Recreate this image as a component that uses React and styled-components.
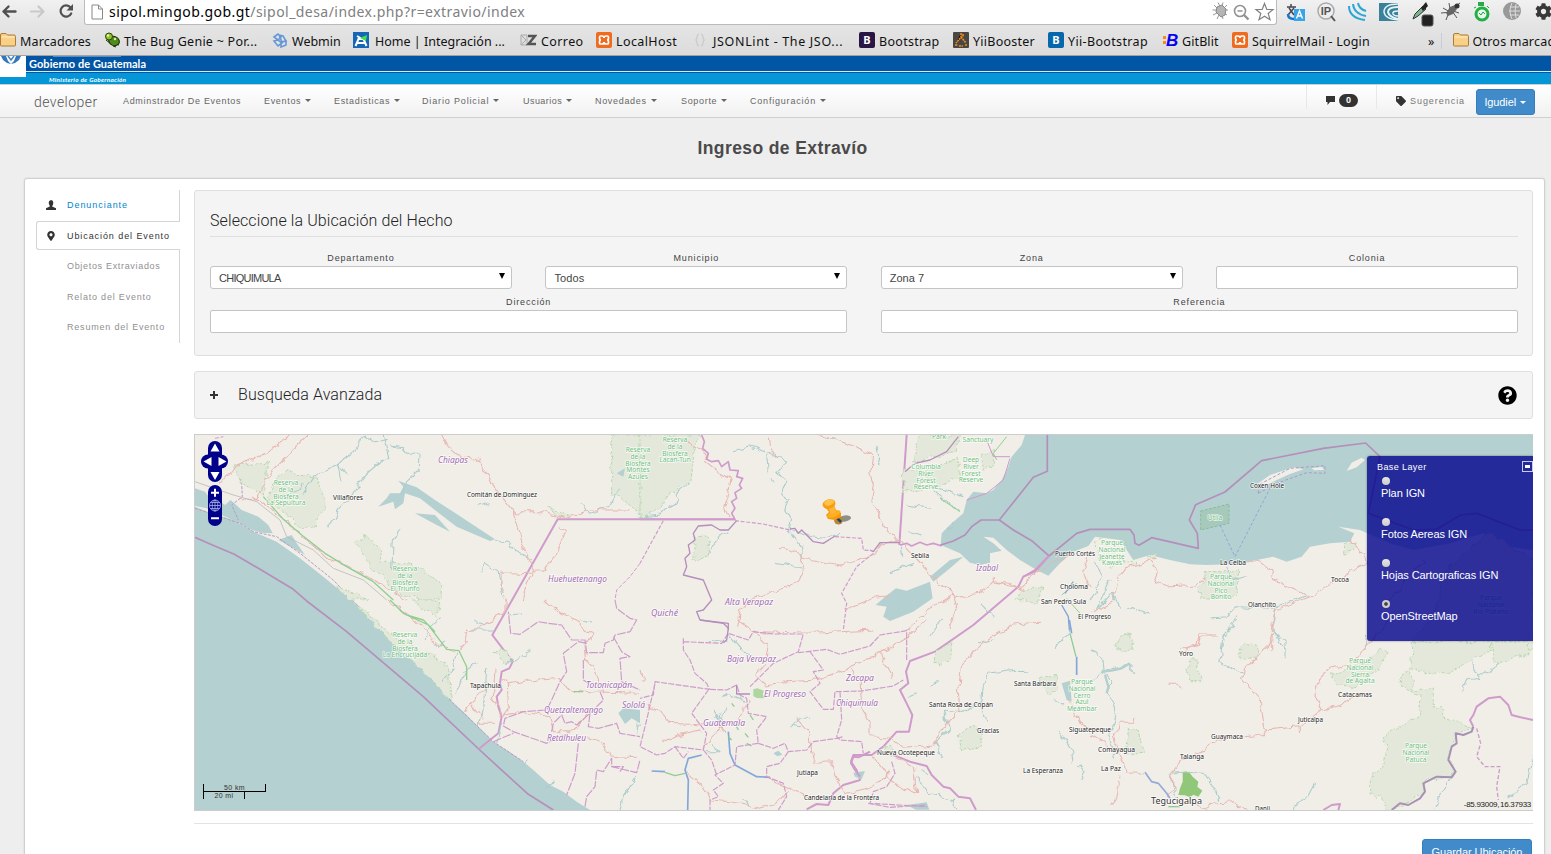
import React from 'react';
import styled, { createGlobalStyle, css } from 'styled-components';
import { FaTag, FaMapMarkerAlt, FaQuestionCircle, FaCog } from 'react-icons/fa';

const GlobalStyle = createGlobalStyle`
  * { box-sizing: border-box; }
  html, body { margin: 0; height: 854px; overflow: hidden; }
  body {
    background: #eee;
    font-family: 'Liberation Sans', Arial, sans-serif;
    font-size: 11px;
    color: #444;
  }
`;

const Page = styled.div`
  width: 1551px;
  height: 854px;
  overflow: hidden;
  display: flex;
  flex-direction: column;
`;

/* ---------- browser chrome ---------- */

const Chrome = styled.header`
  flex: none;
  height: 56px;
  background: linear-gradient(#f1f1f1, #e4e4e4 26px, #dcdcdc);
  border-bottom: 1px solid #a3a3a3;
  font-family: 'Noto Sans', 'Open Sans', sans-serif;
  color: #111;
  overflow: hidden;
`;

const Toolbar = styled.div`
  display: flex;
  height: 25px;
`;

const NavButtons = styled.div`
  width: 84px;
  display: flex;
  svg { display: block; }
`;

const AddressBar = styled.div`
  width: 1193px;
  height: 25px;
  display: flex;
  align-items: center;
  padding-left: 6px;
  background: #fff;
  border: 1px solid #bbb;
  border-top: 0;
  border-radius: 0 0 3px 3px;
`;

const Url = styled.span`
  flex: 1;
  margin-left: 5px;
  font-size: 14px;
  line-height: 20px;
  letter-spacing: 0.45px;
  color: #808080;
  white-space: nowrap;
  b { font-weight: 400; color: #000; }
`;

const Extensions = styled.div`
  display: flex;
  flex: none;
  svg { display: block; }
`;

const Bookmarks = styled.nav`
  display: flex;
  height: 30px;
  align-items: center;
`;

const Bookmark = styled.div`
  flex: none;
  width: ${(p) => p.$w}px;
  display: flex;
  align-items: center;
  gap: ${(p) => p.$gap || 4}px;
  font-size: 12.5px;
  line-height: 18px;
  padding-top: 4px;
  letter-spacing: ${(p) => p.$ls || 0}px;
  white-space: nowrap;
  svg { flex: none; margin-top: -4px; }
`;

const BookmarkEnd = styled.div`
  display: flex;
  align-items: center;
  padding-top: 2px;
  font-size: 12.5px;
  letter-spacing: 0.2px;
  white-space: nowrap;
  i { width: 1px; height: 16px; margin: 0 11px 0 6px; background: #c6cbe0; }
  span { margin-left: 4px; }
  svg { margin-top: -2px; }
`;

/* ---------- site banner and navbar ---------- */

const Banner = styled.div`
  flex: none;
  position: relative;
  height: 28px;
  background: linear-gradient(#0055a5 15px, #dbe7f3 15px, #dbe7f3 16px, #0055a5 16px, #0055a5 17px, #0596d8 17px);
  svg { display: block; }
`;

const Navbar = styled.nav`
  flex: none;
  height: 34px;
  display: flex;
  align-items: center;
  border-top: 1px solid #d0d0d0;
  border-bottom: 1px solid #d0d0d0;
  background: linear-gradient(#fff, #f1f1f1);
  padding: 0 16px 0 34px;
`;

const small = css`
  font-size: 9px;
  letter-spacing: 0.85px;
  white-space: nowrap;
`;

const Brand = styled.div`
  width: 89px;
  padding-top: 2px;
  font-family: Roboto, sans-serif;
  font-weight: 300;
  font-size: 14px;
  letter-spacing: 0.45px;
  color: #555;
`;

const NavItem = styled.div`
  ${small}
  width: ${(p) => p.$w}px;
  letter-spacing: ${(p) => p.$ls ?? 0.68}px;
  color: #666;
`;

const Caret = styled.span`
  display: inline-block;
  margin-left: 4px;
  vertical-align: 2px;
  border: 3px solid transparent;
  border-top-color: currentColor;
  border-bottom: 0;
`;

const Spacer = styled.div`
  flex: 1;
`;

const NavCell = styled.div`
  align-self: flex-start;
  width: ${(p) => p.$w}px;
  height: 24px;
  padding: 7px 0 0 19px;
  display: flex;
  align-items: center;
  gap: 4px;
  border-left: 1px solid #e8e8e8;
  color: #333;
  ${small}
  span { color: #777; letter-spacing: 0.95px; }
`;

const Badge = styled.em`
  width: 19px;
  height: 13px;
  border-radius: 7px;
  background: #333;
  color: #fff;
  font: bold 9px/13px 'Liberation Sans', sans-serif;
  letter-spacing: 0;
  text-align: center;
`;

const Button = styled.button`
  flex: none;
  border: 1px solid #357ebd;
  border-radius: 3px;
  background: #428bca;
  color: #fff;
  font: 11px/14px 'Liberation Sans', Arial, sans-serif;
  letter-spacing: -0.05px;
  width: ${(p) => p.$w}px;
  height: 26px;
  margin-top: ${(p) => p.$mt || 0}px;
  padding: 0;
  white-space: nowrap;
`;

/* ---------- content ---------- */

const PageTitle = styled.h1`
  flex: none;
  margin: 0;
  height: 60px;
  padding: 19px 0 0 14px;
  text-align: center;
  font-size: 17.5px;
  line-height: 22px;
  letter-spacing: 0.4px;
  color: #4a4a4a;
`;

const Card = styled.main`
  flex: none;
  display: flex;
  width: 1521px;
  height: 720px;
  margin-left: 24px;
  padding: 11px 11px 0;
  border: 1px solid #d0d0d0;
  border-radius: 3px;
  background: #fff;
  box-shadow: 0 0 2px rgba(0, 0, 0, 0.12);
`;

const Tabs = styled.ul`
  list-style: none;
  margin: 0 14px 0 0;
  padding: 0;
  width: 144px;
`;

const Tab = styled.li`
  ${small}
  letter-spacing: ${(p) => p.$ls ?? 0.8}px;
  display: flex;
  align-items: center;
  height: ${(p) => p.$h}px;
  padding-left: ${(p) => (p.$active ? 9 : 10)}px;
  padding-bottom: ${(p) => p.$pb || 0}px;
  color: ${(p) => p.$color};
  border-right: 1px solid #d5d5d5;
  ${(p) =>
    p.$active &&
    css`
      border: 1px solid #d5d5d5;
      border-right: 0;
      border-radius: 3px 0 0 3px;
    `}
  svg { width: 10px; height: 10px; color: #333; }
  span { margin-left: ${(p) => (p.$icon ? 11 : 21)}px; }
`;

const Content = styled.section`
  width: 1339px;
`;

const Well = styled.div`
  height: ${(p) => p.$h}px;
  margin-bottom: 15px;
  padding: 0 14px 0 15px;
  border: 1px solid #dfdfdf;
  border-radius: 3px;
  background: #f4f4f4;
`;

const Legend = styled.h2`
  margin: 0;
  font-family: Roboto, sans-serif;
  font-weight: 300;
  font-size: 16px;
  line-height: 20px;
  letter-spacing: 0.1px;
  color: #222;
`;

const FormHead = styled.div`
  height: 46px;
  padding-top: 20px;
  border-bottom: 1px solid #dedede;
`;

const FormRow = styled.div`
  display: grid;
  grid-template-columns: repeat(${(p) => p.$cols}, 1fr);
  gap: 33.5px;
  height: 44px;
  margin-top: ${(p) => p.$mt || 0}px;
`;

const Field = styled.label`
  text-align: center;
  color: #444;
  ${small}
  line-height: 14px;
`;

const control = css`
  display: flex;
  align-items: center;
  width: 100%;
  height: 23px;
  margin-top: 1px;
  border: 1px solid #c4c4c4;
  border-radius: 2px;
  background: #fff;
`;

const Input = styled.input`
  ${control}
`;

const SelectBox = styled.div`
  ${control}
  justify-content: space-between;
  padding: 0 6px 0 8px;
  border-radius: 3px;
  color: #444;
  font-size: 11px;
  letter-spacing: ${(p) => p.$ls}px;
  &::after {
    content: '';
    margin-top: -3px;
    border: 3.5px solid transparent;
    border-top: 6px solid #000;
    border-bottom: 0;
  }
`;

const SearchBar = styled.div`
  display: flex;
  align-items: center;
  height: 46px;
  padding-right: 1px;
`;

const Plus = styled.i`
  width: 8px;
  height: 8px;
  margin-right: 20px;
  background: linear-gradient(#333, #333) center / 8px 2px no-repeat, linear-gradient(#333, #333) center / 2px 8px no-repeat;
`;

const MapFrame = styled.div`
  position: relative;
  height: 377px;
  border: 1px solid #ccc;
  border-right: 0;
  background: #f1eee8;
  overflow: hidden;
  > svg { display: block; }
`;

const LayerPanel = styled.aside`
  position: absolute;
  top: 21px;
  right: 0;
  width: 166px;
  height: 185px;
  padding: 5px 0 0 10px;
  border-radius: 3px 0 0 3px;
  background: rgba(0, 0, 139, 0.8);
  color: #fff;
  box-shadow: 0 0 2px rgba(0, 0, 0, 0.5);
`;

const PanelHead = styled.div`
  display: flex;
  justify-content: space-between;
  height: 15px;
  line-height: 12px;
  font-size: 9px;
  letter-spacing: 0.4px;
`;

const Minimize = styled.i`
  width: 11px;
  height: 11px;
  border: 1px solid #c9caf0;
  background: linear-gradient(#fff, #fff) center / 5px 3px no-repeat;
`;

const LayerOption = styled.div`
  height: 41px;
  padding: 1px 0 0 4px;
  font-size: 11px;
  line-height: 13px;
  letter-spacing: -0.08px;
`;

const Radio = styled.i`
  display: block;
  width: 8px;
  height: 8px;
  margin: 0 0 2px 1px;
  border-radius: 50%;
  background: ${(p) => (p.$on ? 'radial-gradient(#444 1.4px, #ccc 2.2px)' : 'linear-gradient(#e6e6e6, #ccc)')};
`;

const Scale = styled.div`
  position: absolute;
  left: 8px;
  bottom: 11px;
  width: 63px;
  color: #333;
  font-size: 7px;
  line-height: 8px;
  letter-spacing: 0.4px;
  text-align: center;
`;

const ScaleTop = styled.div`
  height: 8px;
  border: 1px solid #000;
  border-top: 0;
`;

const ScaleBottom = styled.div`
  width: 42px;
  height: 7px;
  border: 1px solid #000;
  border-width: 0 1px;
  line-height: 7px;
`;

const Coordinates = styled.div`
  position: absolute;
  right: 2px;
  bottom: 0;
  color: #222;
  font: 8px/10px 'Liberation Sans', sans-serif;
  letter-spacing: -0.3px;
  word-spacing: -1px;
`;

const Footer = styled.div`
  display: flex;
  justify-content: flex-end;
  margin-top: 12px;
  padding: 15px 1px 0 0;
  border-top: 1px solid #e3e3e3;
`;

/* ---------- icons ---------- */

const NavArrows = () => (
  <svg width="84" height="25" viewBox="0 0 84 25" fill="none" strokeLinecap="round" strokeLinejoin="round">
    <path d="M15.5 11.5H3.5M8.5 6.5l-5 5 5 5" stroke="#505050" strokeWidth="2.4" />
    <path d="M31 11.5h12M38.5 6.5l5 5-5 5" stroke="#c9c9c9" strokeWidth="2.2" />
    <path d="M70.5 7.5a5.6 5.6 0 1 0 .7 6" stroke="#505050" strokeWidth="2.2" />
    <path d="M73 4v6.5h-6.5z" fill="#505050" />
  </svg>
);

const PageIcon = () => (
  <svg width="13" height="16" viewBox="0 0 13 16" fill="#fff" stroke="#888">
    <path d="M1 1h6.5l4 4v10H1zM7.5 1v4h4" />
  </svg>
);

const AddressIcons = () => (
  <svg width="65" height="24" viewBox="0 0 65 24">
    <g stroke="#999" fill="#b5b5b5">
      <path d="M3 5l3 3M7 2.500l2 4M12 2.500l-1 4M16 5l-3 3M1.500 10h4M2 15l4-2M6 19l2-4M12 19l-1-4M16 15l-3-2M17 10h-4" fill="none" />
      <path d="M6 7l5-2 4 4-1 6-4 2-5-5z" stroke="#888" />
    </g>
    <circle cx="29" cy="11" r="5.5" fill="none" stroke="#929292" strokeWidth="1.6" />
    <path d="M33 15l4.5 4.5" stroke="#929292" strokeWidth="2.4" />
    <path d="M26.5 11h5" stroke="#929292" strokeWidth="1.5" />
    <path d="M53.5 3.5l2.3 6h6.2l-4.8 4 1.8 6.2-5.5-3.5-5.5 3.5 1.8-6.2-4.8-4h6.2z" fill="#fff" stroke="#808080" strokeWidth="1.2" />
  </svg>
);

const ExtensionIcons = () => (
  <svg width="274" height="28" viewBox="1277 0 274 28">
    <path d="M1287 7h9M1291 4v3M1289 8l5 7M1294 8l-6 7" stroke="#445" strokeWidth="1.5" />
    <path d="M1288 14q0 5 6 5" fill="none" stroke="#1976c8" strokeWidth="2.5" />
    <rect x="1294" y="9" width="11" height="12" fill="#39a5e8" />
    <path d="M1296.500 18.500l3-7.500 3 7.500M1297.500 16h4" fill="none" stroke="#fff" strokeWidth="1.4" />
    <circle cx="1326" cy="11" r="8" fill="#eee" stroke="#aaa" strokeWidth="1.5" />
    <path d="M1331 16l4 5" stroke="#555" strokeWidth="2" />
    <text x="1326" y="15" fontFamily="Liberation Sans, sans-serif" fontSize="11" fontWeight="bold" textAnchor="middle" fill="#555">IP</text>
    <g fill="none" stroke="#2ba6d5" strokeWidth="2">
      <path d="M1349 6q0 12 16 14" /><path d="M1353 4q1 10 13 12" /><path d="M1358 3q1 6 8 8" />
    </g>
    <rect x="1379" y="3" width="19" height="18" fill="#398299" />
    <g fill="none" stroke="#e5f4f8" strokeWidth="1.5">
      <path d="M1398 4q-14 0-14 8 1 7 14 8" /><path d="M1398 7q-10 0-10 5 1 5 10 7" strokeWidth="2" /><path d="M1398 11q-6 0-5 3 1 2 5 2" />
    </g>
    <path d="M1413 19l2-5 8-8 3 3-8 7z" fill="#7fb58a" stroke="#333" />
    <path d="M1421 8l5-6 2 4-5 5z" fill="#222" />
    <rect x="1422" y="15" width="11" height="11" rx="2" fill="#222" stroke="#555" />
    <g stroke="#555"><path d="M1443 8l7 4M1441 13l12-1M1446 20l3-8M1452 11l5 7M1450 9l-1-6M1453 8l7-5M1453 11l6 2" /></g>
    <path d="M1446 13l4-6 5-2 2 4-4 5-5 2z" fill="#666" />
    <circle cx="1457" cy="6" r="2.5" fill="#333" />
    <rect x="1478" y="2" width="6" height="4" fill="#2ca84c" />
    <circle cx="1482" cy="14" r="6" fill="#e9f8ea" stroke="#22b045" strokeWidth="3" />
    <path d="M1479 13l2 2 2-3 2 2M1476 7l-2 1M1487 6l2 2" stroke="#22a040" fill="none" />
    <circle cx="1512" cy="11" r="9" fill="#999" />
    <path d="M1512 3q-4 8 0 16M1516 4q-2 7 0 14M1510 7h9M1509 11h11M1510 15h9" stroke="#ddd" fill="none" />
    <FaCog x="1535" y="3" size="17" color="#383838" />
  </svg>
);

const Folder = () => (
  <svg width="16" height="14" viewBox="0 0 16 14">
    <path d="M.5 12V2q0-1.500 1.500-1.500h4L7.500 2H14q1.500 0 1.500 1.500V12q0 1-1 1h-13q-1 0-1-1z" fill="#f9d088" stroke="#ad7b35" />
    <path d="M1.500 4h13" stroke="#fff0c8" />
  </svg>
);

const icons = {
  folder: <Folder />,
  bug: (
    <svg width="16" height="16" viewBox="0 0 16 16">
      <path d="M2 8l4 3M1 4l3 1M9 14l3 1M13 8l2 3M12 12l3 1" stroke="#222" />
      <ellipse cx="10" cy="9" rx="5.500" ry="4.500" fill="#50891c" stroke="#183000" transform="rotate(25 10 9)" />
      <circle cx="5" cy="4.5" r="3.5" fill="#91c130" stroke="#284400" />
      <circle cx="4" cy="3.5" r="1.2" fill="#e8f8bd" />
      <circle cx="11" cy="7" r="1.200" fill="#d8f0a0" />
    </svg>
  ),
  webmin: (
    <svg width="16" height="16" viewBox="0 0 16 16" fill="#d9e7f8" stroke="#6a96d0" strokeWidth="1.6">
      <path d="M2 5l4-3 3 3-3 3zM7 3l4 1 3 5-4 1zM2 9l4-1 4 3-4 3zM9 10l5-1v4l-5 2z" />
    </svg>
  ),
  home: (
    <svg width="16" height="16" viewBox="0 0 16 16">
      <rect width="16" height="16" fill="#1766b5" />
      <path d="M2.500 14l3-7h5l3 7M4.500 11h7M4 4l5 3" fill="none" stroke="#fff" strokeWidth="2" />
      <path d="M7 6l7-3-1 6z" fill="#3fdf50" />
    </svg>
  ),
  correo: (
    <svg width="17" height="12" viewBox="0 0 17 12">
      <path d="M1 1h6v10H1zl5 5-5 5" fill="#ddd" stroke="#aaa" />
      <path d="M8 2h7L8.500 10H16" fill="none" stroke="#555" strokeWidth="2.5" />
    </svg>
  ),
  xampp: (
    <svg width="16" height="16" viewBox="0 0 16 16">
      <rect width="16" height="16" rx="2" fill="#ef6b1f" />
      <path d="M4.500 4H6q2 0 2 2 0-2 2-2h1.500q1 0 1 2t-1.500 2q1.500 0 1.500 2t-1 2H10q-2 0-2-2 0 2-2 2H4.500q-1 0-1-2T5 8Q3.500 8 3.500 6t1-2z" fill="none" stroke="#fff" strokeWidth="1.7" />
    </svg>
  ),
  json: (
    <svg width="16" height="16" viewBox="0 0 16 16" fill="none" stroke="#c4c4c4">
      <path d="M6 2Q4 2 4 5t-1.500 3Q4 8 4 11t2 3M8 2q2 0 2 3t1.500 3Q10 8 10 11t-2 3" />
    </svg>
  ),
  boot: (
    <svg width="16" height="16" viewBox="0 0 16 16">
      <rect width="16" height="16" rx="2" fill="#2a1644" />
      <text x="8" y="12" fill="#fff" fontSize="11" fontWeight="bold" textAnchor="middle">B</text>
    </svg>
  ),
  yii: (
    <svg width="16" height="16" viewBox="0 0 16 16">
      <rect width="16" height="16" rx="1" fill="#4a4642" />
      <path d="M8 1v4L3 11M8 5l5 6M10 2v3M2 13h3M6 14h4M12 13h2" stroke="#ee8d28" strokeWidth="1.6" strokeDasharray="2 .6" />
    </svg>
  ),
  yiiboot: (
    <svg width="16" height="16" viewBox="0 0 16 16">
      <rect width="16" height="16" rx="2" fill="#0667ad" />
      <text x="8" y="12" fill="#fff" fontSize="11" fontWeight="bold" textAnchor="middle">B</text>
    </svg>
  ),
  git: (
    <svg width="16" height="16" viewBox="0 0 16 16" overflow="visible">
      <path d="M1 4h3v3H1zM1 9h3v3H1z" fill="#f78c10" />
      <text x="4" y="14" fontFamily="Liberation Sans, sans-serif" fill="#0800f0" fontSize="17" fontWeight="bold" fontStyle="italic">B</text>
    </svg>
  ),
};

const Chat = () => (
  <svg width="9" height="9" viewBox="0 0 9 9" fill="#333"><path d="M0 0h9v6H4L1.500 9V6H0z" /></svg>
);

const Person = () => (
  <svg viewBox="0 0 10 10" fill="#333"><path d="M5 0q2.300 0 2.300 2.500T6.200 5.700v.8l3.800 1.700V10H0V8.200l3.800-1.700v-.8Q2.700 4.500 2.700 2.500T5 0z" /></svg>
);

const BannerLogo = () => (
  <svg width="150" height="28" viewBox="0 0 150 28">
    <rect y="15" width="124" height="1" x="26" fill="#dbe7f3" />
    <rect x="0" y="17" width="150" height="12" fill="#0596d8" />
    <rect width="26" height="21" fill="#fff" />
    <path d="M1 0h5l2 5 3 3-4-1-4-3zM21 0l-2 4-4 3-4 1 3-3 2-5z" fill="#3378b8" />
    <path d="M8 0l3 4 3-4" fill="none" stroke="#3f83bf" strokeWidth="1.500" />
    <path d="M53 .3h68" stroke="#6d9ecb" />
    <g fill="#fff" fontFamily="Lato, sans-serif">
      <text x="29" y="11.500" fontSize="11" fontWeight="700" textLength="117">Gobierno de Guatemala</text>
      <text x="49" y="25.500" fontSize="6.300" fontStyle="italic" fontWeight="700" textLength="77">Ministerio de Gobernación</text>
    </g>
  </svg>
);

/* ---------- map ---------- */

const LabelText = styled.text`
  font-family: 'Noto Sans', 'Open Sans', sans-serif;
  font-size: ${(p) => p.$size}px;
  font-style: ${(p) => (p.$italic ? 'italic' : 'normal')};
  fill: ${(p) => p.$fill};
  stroke: #fff;
  stroke-opacity: 0.75;
  stroke-width: 1.6px;
  stroke-linejoin: round;
  paint-order: stroke;
`;

const regions = [
  ['Chiapas', 438, 463, 30], ['Huehuetenango', 548, 582, 59], ['Quiché', 651, 616, 27], ['Alta Verapaz', 725, 605, 48],
  ['Baja Verapaz', 727, 662, 49], ['Totonicapán', 586, 688, 46], ['Sololá', 622, 708, 23], ['Quetzaltenango', 544, 713, 59],
  ['Retalhuleu', 547, 741, 39], ['Guatemala', 703, 726, 42], ['El Progreso', 764, 697, 42], ['Zacapa', 846, 681, 28],
  ['Chiquimula', 836, 706, 42], ['Izabal', 976, 571, 22],
];

const cities = [
  ['Villaflores', 333, 500, 30], ['Comitán de Dominguez', 467, 497, 70], ['Sebila', 911, 558, 18], ['Tapachula', 470, 688, 31],
  ['Puerto Cortés', 1055, 556, 40], ['Choloma', 1060, 589, 28], ['San Pedro Sula', 1041, 604, 45], ['El Progreso', 1078, 619, 33],
  ['Coxen Hole', 1250, 488, 34], ['La Ceiba', 1220, 565, 26], ['Tocoa', 1331, 582, 18], ['Olanchito', 1248, 607, 28],
  ['Santa Barbara', 1014, 686, 42], ['Santa Rosa de Copán', 929, 707, 64], ['Gracias', 977, 733, 22], ['Siguatepeque', 1069, 732, 42],
  ['Comayagua', 1098, 752, 37], ['La Paz', 1101, 771, 20], ['La Esperanza', 1023, 773, 40], ['Nueva Ocotepeque', 877, 755, 58],
  ['Jutiapa', 797, 775, 21], ['Candelaria de la Frontera', 804, 800, 75], ['Yoro', 1179, 656, 14], ['Catacamas', 1338, 697, 34],
  ['Juticalpa', 1298, 722, 25], ['Guaymaca', 1211, 739, 32], ['Talanga', 1180, 759, 24], ['Danli', 1255, 811, 15],
];

const parks = [
  [286, 485, 'Reserva', 'de la', 'Biosfera', 'La Sepultura'],
  [405, 571, 'Reserva', 'de la', 'Biosfera', 'El Triunfo'],
  [405, 637, 'Reserva', 'de la', 'Biosfera', 'La Encrucijada'],
  [638, 452, 'Reserva', 'de la', 'Biosfera', 'Montes', 'Azules'],
  [675, 442, 'Reserva', 'de la', 'Biosfera', 'Lacan-Tun'],
  [939, 439, 'Park'],
  [978, 442, 'Sanctuary'],
  [926, 469, 'Columbia', 'River', 'Forest', 'Reserve'],
  [971, 462, 'Deep', 'River', 'Forest', 'Reserve'],
  [1112, 545, 'Parque', 'Nacional', 'Jeanette', 'Kawas'],
  [1215, 520, 'Utila'],
  [1221, 579, 'Parque', 'Nacional', 'Pico', 'Bonito'],
  [1082, 684, 'Parque', 'Nacional', 'Cerro', 'Azul', 'Meámbar'],
  [1360, 663, 'Parque', 'Nacional', 'Sierra', 'de Agalta'],
  [1416, 748, 'Parque', 'Nacional', 'Patuca'],
  [1491, 600, 'Parque', 'Nacional', 'Río Platano'],
];

/* Each tile group is drawn at three units per pixel from its own corner. */
const Tile = ({ x, y, children }) => <g transform={`translate(${x} ${y}) scale(0.33333)`}>{children}</g>;

const Lines = styled.g`
  fill: none;
  stroke: ${(p) => p.$c};
  stroke-width: ${(p) => p.$w};
  stroke-dasharray: ${(p) => p.$dash || 'none'};
  stroke-linejoin: round;
  stroke-linecap: butt;
`;

const Areas = styled.g`
  fill: ${(p) => p.$c};
  stroke: ${(p) => p.$s || 'none'};
  stroke-width: 3;
  stroke-dasharray: 8 5;
`;

const Border = (p) => <Lines $c="#cf9bcb" {...p} />;
const DarkBorder = (p) => <Lines $c="#b48fbc" $w={5} {...p} />;
const Road = (p) => <Lines $c="#e8b6b2" $w={3.2} filter="url(#winding)" {...p} />;
const River = (p) => <Lines $c="#abcccb" $w={3.2} filter="url(#winding)" {...p} />;
const Reserve = (p) => <Areas $c="#e4e8db" $s="#b6d8af" filter="url(#winding)" {...p} />;
const Water = (p) => <Areas $c="#b5d0d0" {...p} />;

const MapDrawing = () => (
  <svg width="1338" height="375" viewBox="195 435 1338 375">
    <defs>
      <filter id="winding" x="-5%" y="-5%" width="110%" height="110%" colorInterpolationFilters="sRGB">
        <feTurbulence type="fractalNoise" baseFrequency="0.035" numOctaves="2" seed="4" />
        <feDisplacementMap in="SourceGraphic" scale="24" xChannelSelector="R" yChannelSelector="G" />
      </filter>
    </defs>
    <rect x="195" y="435" width="1338" height="375" fill="#f1eee8" />
    <Tile x={190} y={350}>
      <Water>
        <path d="M15 470L60 488L130 510L190 545L260 575L330 625L400 680L485 750L535 795L600 855L700 950L780 1050L820 1085L860 1125L910 1175L960 1207L1000 1235L1030 1260L1080 1305L1120 1325L1160 1355L1200 1380H15z" />
        <path d="M15 415L45 425L60 445L85 450L105 465L122 450L155 480L205 500L235 525L248 550L215 548L185 540L150 520L100 497L50 475L15 468z" />
        <path d="M265 570L305 555L320 580L345 615L310 595z" />
        <path d="M2505 255L2495 285L2465 320L2455 350L2435 390L2410 420L2390 430L2350 425L2330 450L2320 490L2285 520L2255 550L2252 585L2310 610L2340 638L2370 645L2400 638L2400 610L2435 602L2410 580L2380 560L2410 563L2450 600L2490 630L2540 660L2575 677L2610 640L2650 605L2695 588L2715 560L2790 570L2830 630L2880 615L2940 630L3000 643L3050 645L3140 642L3200 630L3250 620L3290 635L3335 620L3360 590L3420 580L3480 575L3493 550L3445 530L3510 540L3600 580L3670 600L3780 580L3880 550L3960 590L4029 600V255z" />
      </Water>
      <Areas $c="#f1eee8">
        <path d="M3205 400L3240 375L3285 360L3310 352L3340 358L3300 372L3260 390L3220 410zM3470 363L3485 338L3515 323L3525 330L3500 352zM3365 355l30-4 8 8-30 2z" />
      </Areas>
      <DarkBorder>
        <path d="M15 562L60 582L133 613L200 652L310 718L350 753L470 845L600 955L700 1040L866 1197L940 1265L1015 1333L1090 1380" />
        <path d="M2572 255V364L2530 382L2428 510L2470 540L2525 572L2577 618L2660 550L2700 538L2820 538L2832 555L2835 580L2847 586L2885 563L3025 595L3022 550L2998 510L3017 464L3105 426L3215 332L3400 295L3527 279L3570 320L3535 490L3670 540L3740 538L3812 495L3860 490L3990 540H4029" />
        <path d="M2428 510H2373L2345 530L2325 555L2290 573L2250 586" />
      </DarkBorder>
      <Border $w={6}>
        <path d="M1635 508H1103L907 855L968 935L958 955L935 965L930 1000L935 1020L920 1040L925 1070L935 1100L925 1150L866 1197" />
        <path d="M2150 255L2128 585" />
        <path d="M2577 618L2535 665L2500 680L2485 710L2350 825L2235 905L2160 933L2148 965L2155 1000L2130 1020L2150 1060L2167 1095L2157 1145L2120 1145L2080 1190L2045 1215L1990 1215L1983 1235L2000 1260L2010 1290L1960 1305L1930 1330L1915 1365L1880 1362L1850 1378" />
        <path d="M2110 1215L2160 1235L2210 1248L2225 1275L2260 1310L2280 1315L2305 1340L2340 1345L2358 1380" />
      </Border>
      <Lines $c="#b79bc4" $w={3} $dash="9 4">
        <path d="M15 475L150 520L190 545L260 560L330 610L430 690L485 750L600 855L700 950L780 1050L910 1175L1000 1235" />
        <path d="M135 347L155 400L157 440L125 465L145 510" />
      </Lines>
    </Tile>

    {/* north west */}
    <Tile x={190} y={350}>
      <Reserve>
        <path d="M130 345L235 340L225 385L220 435L150 400z M285 365L380 385L410 465L375 525L340 535L290 495L235 440L255 390z M1265 255V430L1300 450L1350 490V255z" />
        <path d="M500 580L530 560L575 600L570 635L690 650L720 680L755 710L750 750H700L610 725L580 670L540 655L530 620z M1070 470L1140 500L1110 503zM440 710L540 750H480z" />
      </Reserve>
      <Water>
        <path d="M565 470L590 445L600 430L630 430L640 410L625 392L680 412L735 450L800 492L915 568L900 573L800 530L750 492L690 445L645 430L640 460L615 478L610 455zM675 490L735 495L780 545L740 525zM1280 370L1305 355L1300 380z" />
      </Water>
      <River>
        <path d="M523 255L495 300L442 347L380 370L340 430M440 347L472 377M442 350L450 395M523 255L550 275L590 265M580 255L597 325L560 345L520 380L490 430L450 475L410 535" />
        <path d="M600 285L640 290L650 310L690 310L688 360L650 395L640 430M630 535L610 570L605 660M915 570L950 580L1030 635M870 665L880 640L920 665L930 700L940 750M860 465L905 455M1290 410L1255 470L1200 490L1170 460M300 430L330 420L340 400" />
      </River>
      <Road>
        <path d="M300 255L230 310L140 345L90 400M355 255L230 380L200 450L145 445M755 255L775 290L810 320L860 325L905 400L970 485L990 550L1000 600L1030 660L1000 750M970 485L1060 485L1130 508L1200 480L1320 480M1110 530L1125 545L1095 620L1060 665L930 670L930 700L950 750M185 440L280 505L330 550L410 625L500 660L650 750" />
      </Road>
      <Lines $c="#bbb" $w={2.5}><path d="M15 395L130 435L200 455L270 510L290 560L370 600L430 655L520 690L590 750" /></Lines>
      <Lines $c="#8fd091" $w={4}><path d="M220 440L280 508L335 555L405 610L470 650L550 695L610 750" /></Lines>
      <Border $w={3} $dash="12 5"><path d="M1350 640L1320 680L1280 720L1275 750M75 265L100 260" /></Border>
    </Tile>

    {/* north centre */}
    <Tile x={640} y={430}>
      <Reserve>
        <path d="M0 15H180L160 60L150 150L85 195L60 240L0 262zM165 320L205 318V382L150 392L165 370zM840 15L955 15L945 65L820 95zM850 125L950 85L960 140L880 180zM790 120H845V185H790zM1025 75L1060 60V110L1030 120zM1145 485L1205 465L1195 520L1130 510z" />
      </Reserve>
      <Water>
        <path d="M707 525L730 505L768 475L800 482L870 455L878 505L820 545L750 573L730 560L740 530zM870 440L930 390L970 380L930 415L880 455z" />
      </Water>
      <River>
        <path d="M280 65L330 50L385 70L440 90L415 125L435 150L425 195L450 205L435 235L455 270L445 300L485 350L488 395M380 75L385 130M390 145l5 15M710 50L722 90L715 110M405 400L485 415M455 300L505 318L550 325L600 310M750 425L820 400M800 225L870 235M805 305L850 315M860 165L970 200M1025 520L1060 560M150 155L105 190L115 215L80 235L60 255L0 262M265 305L235 320L205 370M780 345l5 35" />
        <path d="M555 20l30 5M880 185l40 30 40 30M920 300l20-20" />
      </River>
      <Road>
        <path d="M100 20L190 60L200 95L270 150L255 230L270 265M385 20L390 60L410 80M545 15L620 40L695 70L690 130L700 165L690 210L735 290L780 335L830 390L880 440L940 495L950 530L930 600M420 355L485 375L490 430L460 465L355 500L300 535L290 590M490 385L600 405L700 375L720 340L780 330M940 500L1020 490L1060 455L1140 475L1200 420L1300 370M610 540L700 505L750 500M800 600L860 545L940 498M1340 385L1325 430L1350 470M1060 440V455L1110 460L1150 485" />
      </Road>
      <Lines $c="#8fd091" $w={3}><path d="M960 145L1000 150M900 205L960 245M1070 90L1060 70L1100 20M1265 495L1310 460M1280 505L1320 550" /></Lines>
      <Lines $c="#80a4d4" $w={4}><path d="M1265 525L1285 560L1288 600M1300 455L1275 490" /></Lines>
      <Border $w={5}>
        <path d="M185 15L193 35L188 55L205 70L200 88L215 95L235 92L245 110L265 95L270 120L295 122L290 140L308 145L298 165L305 175L285 188L290 205L275 215L285 235L275 250L285 268H0" />
        <path d="M780 345L800 340L815 348L840 337L860 345L880 340L905 348M1225 378L1185 420L1150 440" />
      </Border>
      <DarkBorder $w={4}>
        <path d="M290 272L265 300L240 300L215 285L175 288L160 310L165 330L145 345L150 370L135 385L140 410L130 435L190 450L215 510L190 540L170 545L180 570L265 580V600" />
        <path d="M450 297L465 295L475 310L485 300L520 335L550 340L585 318M780 338H720L700 365L690 360" />
        <path d="M795 125L825 100L870 90L920 65L955 20" />
      </DarkBorder>
      <Border $w={3.5} $dash="12 5">
        <path d="M285 272L370 282L450 300M585 320L665 325L670 360L695 362M700 370L650 410L605 490L620 520L610 600M70 272L0 400" />
      </Border>
      <Border $w={3}><path d="M1110 85L1090 150L1040 190L980 210M1040 30L1060 80H1110" /></Border>
    </Tile>

    {/* north east */}
    <Tile x={1090} y={360}>
      <Areas $c="#a6c9bc" $s="#84bd98"><path d="M332 453L417 432V490L332 510z" /></Areas>
      <Reserve $c="none"><path d="M20 545L40 525H105L115 560L140 590L135 610L90 600L60 625L30 600z" /></Reserve>
      <Reserve><path d="M345 635H445V710L330 715L325 685L345 665zM765 550L795 545L790 570L760 580zM75 850L110 820L130 870H80zM175 590L200 580L190 600zM460 865L490 848L500 870z" /></Reserve>
      <Lines $c="#a99cc8" $w={3} $dash="9 6"><path d="M505 400V375L600 325L705 317V340L650 338L560 370z" /></Lines>
      <Lines $c="#8fa6dc" $w={3} $dash="9 6"><path d="M390 495L435 590L540 385" /></Lines>
      <River><path d="M60 660L20 750L65 700L95 745M410 620L430 660L465 650M365 773L410 770L440 740L550 745L640 710L660 705M560 745L550 800L585 870M440 770L430 800L400 825L395 870M10 600L40 650L0 720M115 745L170 765" /></River>
      <Road><path d="M10 760L70 720L80 660L110 620L175 600L205 635L190 665L240 680L320 675L345 655M180 600L200 595M470 605L515 605L545 630L550 655L660 710L800 625L830 610M660 710L560 750L545 800L545 870M330 825H378M330 825L320 855L270 870M780 540L820 580L830 610M1000 600L880 740" /></Road>
      <Reserve><path d="M1060 640L1150 560L1200 520L1329 600V870H980L970 840L1030 770z" /></Reserve>
    </Tile>

    {/* south west */}
    <Tile x={190} y={600}>
      <Reserve><path d="M665 0L750 0L740 48L700 25zM485 0L600 100L700 160L770 185L785 305L700 215L590 115z M915 155L950 152L965 180L940 190z" /></Reserve>
      <Water><path d="M1285 340L1300 325L1350 330V370L1325 355L1305 372z" /></Water>
      <River><path d="M755 50L720 80L705 115M770 120L740 140M800 155L790 200L755 245M830 215L800 280M860 185L820 215M890 205L885 300L865 375M1022 152L970 185L945 190M885 75L850 60M910 90L840 90M950 45L990 42M935 365L920 430M1000 500l15-15M1070 555l25-10M1340 530L1300 590L1290 630M1205 70L1170 60M1345 370L1340 400" /></River>
      <Road><path d="M590 0L680 60L740 130L790 150M945 0V40L890 65L870 85L830 90L825 130L805 155M915 205L910 290L930 345M820 335L890 260M845 310L880 355M865 370H915M940 235L955 255L1020 240L1110 232L1140 270L1200 275L1350 280M955 255L958 320L940 345L1000 335L1080 350L1090 395H1150L1200 335M1065 0L1110 40L1160 60L1185 90L1210 100L1185 140L1190 180L1210 200L1240 280M1195 410L1230 420L1260 465L1340 470" /></Road>
      <Lines $c="#8fd091" $w={4}><path d="M600 0L640 40L715 75L770 148L807 152L830 200L830 240M650 45L700 60L735 95M1150 275h30" /></Lines>
      <Border $w={3.5} $dash="26 4">
        <path d="M1275 0L1280 25L1320 55L1340 60L1320 95L1275 105L1270 120L1245 130L1240 158H1190L1185 120L1145 120L1115 75L1075 70L1045 65L990 103L962 100L955 35M1190 130L1165 125L1120 160L1130 215L1110 245L1085 300L1070 330L1000 335L945 355L940 378L970 395L1070 430L1120 405M1180 180V240L1195 250M1270 110L1295 155L1320 170L1290 175L1295 245L1350 270M1085 395L1090 370L1115 345L1125 370L1145 365L1160 375L1200 340L1195 380L1225 385L1280 370L1290 400L1350 410M1165 430L1155 520L1130 585M1230 275L1240 300L1200 340M910 425L970 400M1185 620L1190 590L1215 560L1220 510L1240 515L1265 475V500L1340 518L1350 480M1265 500L1300 500L1290 515" />
      </Border>
    </Tile>

    {/* south centre */}
    <Tile x={640} y={620}>
      <Areas $c="#afd6a0"><path d="M340 208L352 205L372 212L368 222L374 235L350 234L340 228z" /></Areas>
      <Reserve><path d="M885 90L940 68L925 120L900 138L883 125zM955 345L990 315L1028 335L1020 385L965 390zM1200 170L1250 170L1252 200L1230 225L1210 205zM735 380h20v25h-20z" /></Reserve>
      <Water><path d="M1265 190L1290 182L1295 245L1280 240zM400 400l15-8 12 12-15 5zM640 458l35-5-10 25-20-8zM800 555l60-8 8 22h-40z" /></Water>
      <River><path d="M265 40L310 95L330 100M250 235L260 220L320 245M210 68L260 60M455 318L480 295L505 295M450 315l30 5M1165 160L1150 148L1100 150L1045 160L1030 200L1025 245L960 278L910 270L925 330L885 370L905 410M1025 265L1040 310M870 195L900 185M805 230l25-12M1255 330L1295 390L1300 435M1315 435L1335 460L1325 480M830 475L870 520L940 540L950 570M845 445L860 465M905 0L870 50M1060 60L1020 65M215 370L240 395L200 395M310 530l15 30M1245 80L1290 30M1245 235l30 20M220 270l30 40M240 280l10 50M225 285l20 5M235 300l25 10M255 265l-10 40" /></River>
      <Road><path d="M290 0L340 35L385 80L375 135L350 165L375 195L440 185L530 180L600 155L720 100L800 55L860 0M340 35L520 40L700 30M725 100L735 125L755 170M630 140L660 180L665 260L690 305L690 350L755 355L790 385L880 375L925 300L960 275L955 220L965 130L1050 50L1120 15L1200 10M470 295L510 345L515 395L525 430L575 425L585 470L620 520L700 500L750 450M20 255L60 270L90 310L190 315M190 385L240 320L290 300L330 240M70 365L110 345L185 330M140 455L180 490L215 540L270 545L360 565L410 550L445 510M380 470L440 500L520 540M700 410L760 490L830 520L820 440L770 410M0 150L10 185M1290 240L1320 310L1350 325M230 340l8-25M240 340l4-20M250 338l-4-20M258 335l-8-15" /></Road>
      <Lines $c="#82a8da" $w={5}><path d="M35 453L75 455M185 405L145 415L135 450L145 480L143 570M265 335L270 400L285 435L350 470L390 472M1288 0L1295 40M1310 110V165" /></Lines>
      <Lines $c="#90cc92" $w={4}><path d="M75 457L105 467L135 460M1290 40L1308 110M275 250l8 10M330 285l10 15M265 350l10 10M315 340l10 12M320 370l15 8M290 320l5 10" /></Lines>
      <Border $w={3.5} $dash="18 4">
        <path d="M130 55V90L150 120L165 160L200 190L208 208L45 185L40 225L0 235M130 65L245 70L265 40L325 60L340 35L400 42L490 42L475 95L400 130L330 200M475 98L560 88L600 103L690 78L720 45L800 32V120M510 95L550 150L520 155L540 190L510 215L550 268H580L585 215L665 213L760 198L790 180M600 215L605 300L590 350L600 360L665 365L670 400M210 208L260 210L290 195L300 225L320 235L325 280L380 290L350 330L355 370L290 380L285 435L225 465L250 490L220 510L235 530L210 540V570M45 190L20 300L0 380L50 405L75 400L105 380L190 390L200 340L155 280L205 210M105 380L130 415L145 395M190 390L215 420L230 465M355 370L400 385L435 370L445 395L500 390L520 365L590 355M445 395L420 430L380 440V470L430 490L440 530L415 570M590 355L610 350M755 425L765 460L740 500L700 515L690 550L860 560M685 550L750 562L860 555" />
      </Border>
      <DarkBorder $w={4}><path d="M180 0L250 10L265 25L260 60L250 68M290 195V222H330" /></DarkBorder>
      <Border $w={6}><path d="M690 395L670 405L655 412L640 410L633 430L645 450L660 470" /></Border>
    </Tile>

    {/* south east */}
    <Tile x={1090} y={620}>
      <Reserve>
        <path d="M75 70L115 40L130 85L95 95zM445 100L460 75L498 68L505 110L450 120zM285 150L315 115L335 185H300zM115 328L145 332L160 400L110 405zM720 170L820 130L870 90L892 95L870 145L800 200L750 195z" />
        <path d="M970 65H1205L1200 90L1130 130L1080 155L1030 163L960 145L935 165L930 195L990 225L985 290L880 350L890 390L880 440L845 465L835 520L860 535L875 520L885 568H915L1000 520L1010 480L1085 470L1095 445L1075 410L1100 340L1150 320L1060 290L1055 260L1030 265V205L970 210L960 140z M1205 65H1315V100L1230 130L1210 125z" />
      </Reserve>
      <Areas $c="#91c779"><path d="M278 457L290 455L300 460L308 470L325 485L322 500L337 512L325 530L310 524L300 532L285 526L265 525L270 505L278 485z" /></Areas>
      <River><path d="M0 90L35 110L40 155L60 180L55 220L80 260L75 300L55 350L75 400L65 420M35 155L90 145L110 130L135 155M35 155L0 185M440 0L400 45L390 125L455 160M550 30L585 65V120M830 40L825 90M1115 215L1130 180L1165 175L1145 125M1165 170L1230 130M1085 460L1060 510L1030 565M1329 410L1310 490L1280 515L1250 530M245 460L290 455L350 465L390 540M240 465L260 530M675 488L650 535L610 555L615 568" /></River>
      <Lines $c="#b3d0cf" $w={7}><path d="M35 155L65 152L95 145L120 130M45 165L55 200L50 220" /></Lines>
      <Road><path d="M550 0L545 70L460 150L455 180L510 240L525 330L630 320L695 270L675 225L685 180L720 145L780 135L900 0M695 270L740 260L820 220M530 330L520 345L460 350L380 355L340 395L290 410L245 460L250 500L240 530M378 45L330 45L320 75L280 90M135 290L130 310L90 310L70 350L110 460L165 458M90 470L75 540L60 560M0 345L40 370L70 400M280 205L260 190L235 190M260 540L350 565L370 550L430 545L470 568M630 320L632 340" /></Road>
      <Lines $c="#92abd8" $w={5}><path d="M165 457L185 485L205 490L230 520L240 535" /></Lines>
      <Lines $c="#90cc92" $w={4}><path d="M235 560H270" /></Lines>
      <DarkBorder $c="#a891b3" $w={6}><path d="M905 570L930 550L955 555L990 535L1005 515L1000 490L1040 470L1085 472L1097 455L1075 420L1085 380L1100 370L1097 340L1120 345L1145 335L1150 320" /></DarkBorder>
      <Border $w={6}><path d="M1150 320L1140 300L1150 285L1160 260L1195 235L1230 230L1255 255L1265 285L1285 290L1329 300M700 570L725 555L750 552L745 570" /></Border>
      <Border $w={4} $dash="12 6"><path d="M1160 325L1172 370L1160 410L1185 440H1230L1220 500L1225 540" /></Border>
    </Tile>

    {parks.map(([x, y, ...lines]) => (
      <LabelText key={`${x}-${y}`} $size={6.6} $fill="#6cbf7a" textAnchor="middle">
        {lines.map((line, i) => (
          <tspan key={line} x={x} y={y + i * 6.8}>{line}</tspan>
        ))}
      </LabelText>
    ))}
    {regions.map(([name, x, y, w]) => (
      <LabelText key={name} $size={8.4} $italic $fill="#a36cb0" x={x} y={y + 0.3} textLength={w} lengthAdjust="spacingAndGlyphs">{name}</LabelText>
    ))}
    {cities.map(([name, x, y, w]) => (
      <LabelText key={name} $size={7.1} $fill="#222" x={x} y={y} textLength={w} lengthAdjust="spacingAndGlyphs">{name}</LabelText>
    ))}
    <LabelText $size={9} $fill="#333" x="1151" y="803.5" textLength="51">Tegucigalpa</LabelText>

    {/* push pin */}
    <ellipse cx="845" cy="518.5" rx="6" ry="3" fill="#8e8e8a" transform="rotate(-10 845 518)" />
    <circle cx="838.5" cy="520" r="4.5" fill="#b38a3c" />
    <path d="M836 517l5 5" stroke="#29406c" strokeWidth="2.5" />
    <path d="M826 508l8-3 2 5 5 3v4l-6 3-7-1-2-4 3-3z" fill="#f79a0c" />
    <ellipse cx="834" cy="514" rx="7" ry="3" fill="#ffae1f" transform="rotate(-22 834 514)" />
    <path d="M828 507l6-2 2 7-5 3z" fill="#fdb63a" />
    <ellipse cx="829" cy="504" rx="6.5" ry="4.7" fill="#f79d10" transform="rotate(-15 829 504)" />
    <ellipse cx="829" cy="502.5" rx="5" ry="3" fill="#ffc14a" transform="rotate(-15 829 502)" />

    {/* pan and zoom controls */}
    <g fill="#00008b">
      <rect x="208" y="441" width="14" height="41" rx="7" />
      <rect x="201" y="454.5" width="27" height="14" rx="7" />
      <rect x="208" y="485" width="14" height="41" rx="7" />
    </g>
    <g fill="#fff">
      <path d="M215 443.500l4.500 8h-9zM215 480l4.500-8h-9zM203.500 461.500l8-4.500v9zM226.500 461.500l-8-4.500v9z" />
      <path d="M211 491.800h3v-3h2v3h3v2h-3v3h-2v-3h-3zM211 517.300h8v2h-8z" />
    </g>
    <g fill="none" stroke="#aab6e2" strokeWidth=".8">
      <circle cx="215" cy="505.5" r="5.5" />
      <path d="M209.500 505.500h11M215 500v11M210.500 502.500h9M210.500 508.500h9" />
      <ellipse cx="215" cy="505.5" rx="2.8" ry="5.5" />
    </g>
  </svg>
);

const bookmarks = [
  ['folder', 'Marcadores', 104, 0.15], ['bug', 'The Bug Genie ~ Por...', 168, 0.25], ['webmin', 'Webmin', 81, 0],
  ['home', 'Home | Integración ...', 167, 0, 6], ['correo', 'Correo', 76, 0.4], ['xampp', 'LocalHost', 97, 0.4],
  ['json', 'JSONLint - The JSO...', 166, 0.65, 4], ['boot', 'Bootstrap', 94, 0.3], ['yii', 'YiiBooster', 95, 0.25],
  ['yiiboot', 'Yii-Bootstrap', 114, 0.35], ['git', 'GitBlit', 70, 0.1], ['xampp', 'SquirrelMail - Login', 196, 0.2],
];

const menu = [
  ['Adminstrador De Eventos', 141], ['Eventos', 70, true], ['Estadisticas', 88, true], ['Diario Policial', 101, true, 0.85],
  ['Usuarios', 72, true, 0.45], ['Novedades', 86, true], ['Soporte', 69, true], ['Configuración', 90, true, 0.8],
];

export default function App() {
  return (
    <Page>
      <GlobalStyle />
      <Chrome>
        <Toolbar>
          <NavButtons><NavArrows /></NavButtons>
          <AddressBar>
            <PageIcon />
            <Url><b>sipol.mingob.gob.gt</b>/sipol_desa/index.php?r=extravio/index</Url>
            <AddressIcons />
          </AddressBar>
          <Extensions><ExtensionIcons /></Extensions>
        </Toolbar>
        <Bookmarks>
          {bookmarks.map(([icon, label, w, ls, gap]) => (
            <Bookmark key={label} $w={w} $ls={ls} $gap={gap}>{icons[icon]}{label}</Bookmark>
          ))}
          <BookmarkEnd>»<i /><Folder /><span>Otros marcadores</span></BookmarkEnd>
        </Bookmarks>
      </Chrome>
      <Banner><BannerLogo /></Banner>
      <Navbar>
        <Brand>developer</Brand>
        {menu.map(([label, w, caret, ls]) => (
          <NavItem key={label} $w={w} $ls={ls}>{label}{caret && <Caret />}</NavItem>
        ))}
        <Spacer />
        <NavCell $w={70}><Chat /><Badge>0</Badge></NavCell>
        <NavCell $w={100}><FaTag size="10" /><span>Sugerencia</span></NavCell>
        <Button $w={59} $mt={2}>lgudiel<Caret /></Button>
      </Navbar>
      <PageTitle>Ingreso de Extravío</PageTitle>
      <Card>
        <Tabs>
          <Tab $h={31} $pb={2} $ls={0.95} $icon $color="#0088cc"><Person /><span>Denunciante</span></Tab>
          <Tab $h={29} $ls={0.92} $icon $active $color="#333"><FaMapMarkerAlt /><span>Ubicación del Evento</span></Tab>
          <Tab $h={32} $ls={0.68} $color="#909090"><span>Objetos Extraviados</span></Tab>
          <Tab $h={30} $color="#909090"><span>Relato del Evento</span></Tab>
          <Tab $h={31} $pb={2} $color="#909090"><span>Resumen del Evento</span></Tab>
        </Tabs>
        <Content>
          <Well $h={166}>
            <FormHead><Legend>Seleccione la Ubicación del Hecho</Legend></FormHead>
            <FormRow $cols={4} $mt={14}>
              <Field>Departamento<SelectBox $ls={-0.75}>CHIQUIMULA</SelectBox></Field>
              <Field>Municipio<SelectBox $ls={0.1}>Todos</SelectBox></Field>
              <Field>Zona<SelectBox $ls={0}>Zona 7</SelectBox></Field>
              <Field>Colonia<Input /></Field>
            </FormRow>
            <FormRow $cols={2}>
              <Field>Dirección<Input /></Field>
              <Field>Referencia<Input /></Field>
            </FormRow>
          </Well>
          <Well $h={48}>
            <SearchBar>
              <Plus />
              <Legend>Busqueda Avanzada</Legend>
              <Spacer />
              <FaQuestionCircle size="19" color="#000" />
            </SearchBar>
          </Well>
          <MapFrame>
            <MapDrawing />
            <LayerPanel>
              <PanelHead>Base Layer<Minimize /></PanelHead>
              <LayerOption><Radio />Plan IGN</LayerOption>
              <LayerOption><Radio />Fotos Aereas IGN</LayerOption>
              <LayerOption><Radio />Hojas Cartograficas IGN</LayerOption>
              <LayerOption><Radio $on />OpenStreetMap</LayerOption>
            </LayerPanel>
            <Scale><ScaleTop>50 km</ScaleTop><ScaleBottom>20 mi</ScaleBottom></Scale>
            <Coordinates>-85.93009, 16.37933</Coordinates>
          </MapFrame>
          <Footer><Button $w={110}>Guardar Ubicación</Button></Footer>
        </Content>
      </Card>
    </Page>
  );
}
